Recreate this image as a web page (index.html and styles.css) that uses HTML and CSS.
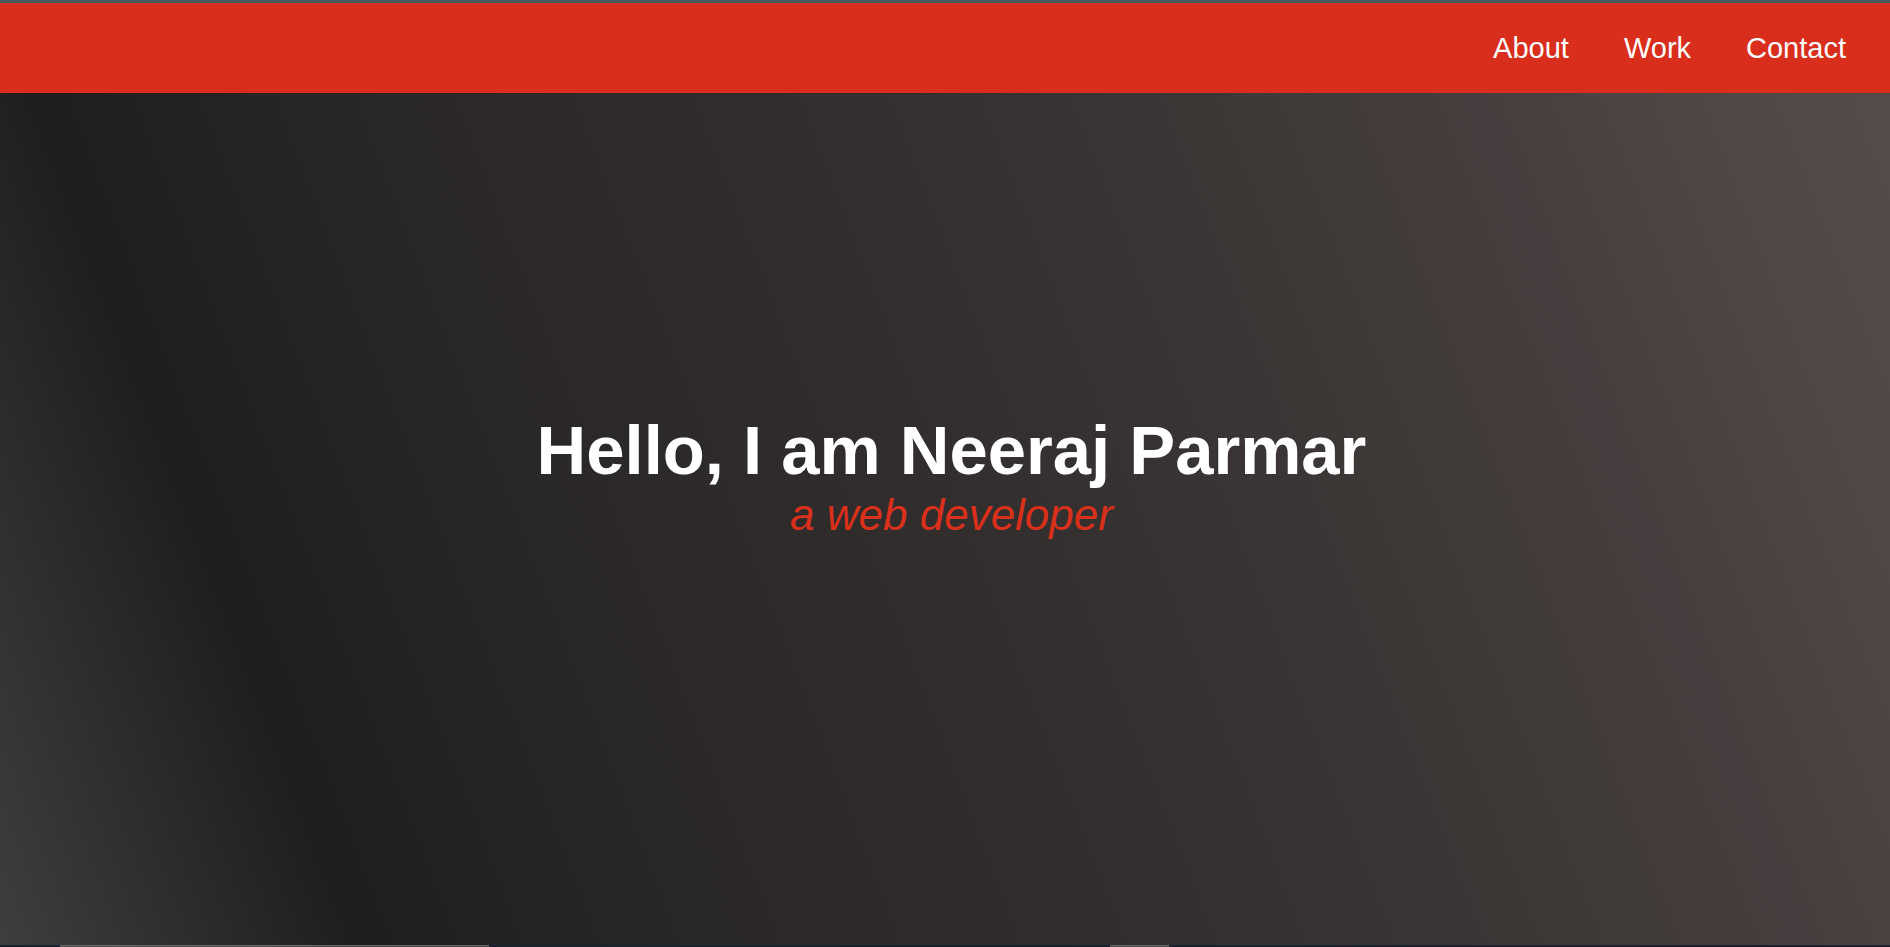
FILE: index.html
```html
<!DOCTYPE html>
<html lang="en">
<head>
<meta charset="utf-8">
<title>Neeraj Parmar</title>
<link rel="stylesheet" href="styles.css">
</head>
<body>
<div class="top-edge"></div>
<div class="stage">
  <header class="site-header">
    <nav class="nav">
      <a class="nav-link" href="#about">About</a>
      <a class="nav-link" href="#work">Work</a>
      <a class="nav-link" href="#contact">Contact</a>
    </nav>
  </header>
  <section class="hero">
    <div class="hero-content">
      <h1 class="hero-title">Hello, I am Neeraj Parmar</h1>
      <p class="hero-subtitle">a web developer</p>
    </div>
  </section>
</div>
<div class="bottom-edge">
  <span class="edge-navy edge-a"></span>
  <span class="edge-grey edge-b"></span>
  <span class="edge-navy edge-c"></span>
  <span class="edge-grey edge-d"></span>
  <span class="edge-navy edge-e"></span>
</div>
</body>
</html>
```

FILE: styles.css
```css
* { box-sizing: border-box; }

html, body {
  margin: 0;
  padding: 0;
  height: 100%;
  overflow: hidden;
}

body {
  font-family: "Liberation Sans", Arial, sans-serif;
  background: #1c2132;
  display: flex;
  flex-direction: column;
}

.top-edge {
  height: 3px;
  flex: 0 0 3px;
  background: #4a5b60;
}

.stage {
  flex: 1 1 auto;
  display: grid;
  grid-template-rows: 1fr;
  grid-template-columns: 1fr;
  background: linear-gradient(69deg,
    #3f3e3c 0%,
    #1f1e1e 16%,
    #2a2827 32%,
    #302d2c 48%,
    #3b3635 66%,
    #463e3e 80%,
    #4f4746 90%,
    #554c4b 100%);
}

.site-header {
  grid-area: 1 / 1;
  align-self: start;
  height: 90px;
  background: #d82e1b;
  display: flex;
  align-items: center;
  justify-content: flex-end;
  padding-right: 44px;
  padding-top: 2px;
  z-index: 2;
}

.nav {
  display: flex;
  gap: 55px;
}

.nav-link {
  color: #ffffff;
  text-decoration: none;
  font-size: 29px;
  line-height: 1.15;
}

.hero {
  grid-area: 1 / 1;
  display: flex;
  align-items: center;
  justify-content: center;
  padding-left: 13px;
  padding-top: 2px;
}

.hero-content {
  text-align: center;
}

.hero-title {
  margin: 0;
  font-size: 68.8px;
  font-weight: 700;
  color: #ffffff;
  line-height: normal;
}

.hero-subtitle {
  margin: 0;
  font-size: 44px;
  font-style: italic;
  color: #d9301c;
  line-height: normal;
}

.bottom-edge {
  flex: 0 0 2px;
  height: 2px;
  display: flex;
}

.edge-navy { background: #1b2033; }
.edge-grey { background: #4a4a4a; border-top: 1px solid #6a6a6a; }
.edge-a { width: 60px; }
.edge-b { width: 429px; }
.edge-c { width: 621px; }
.edge-d { width: 59px; }
.edge-e { flex: 1; }
```
